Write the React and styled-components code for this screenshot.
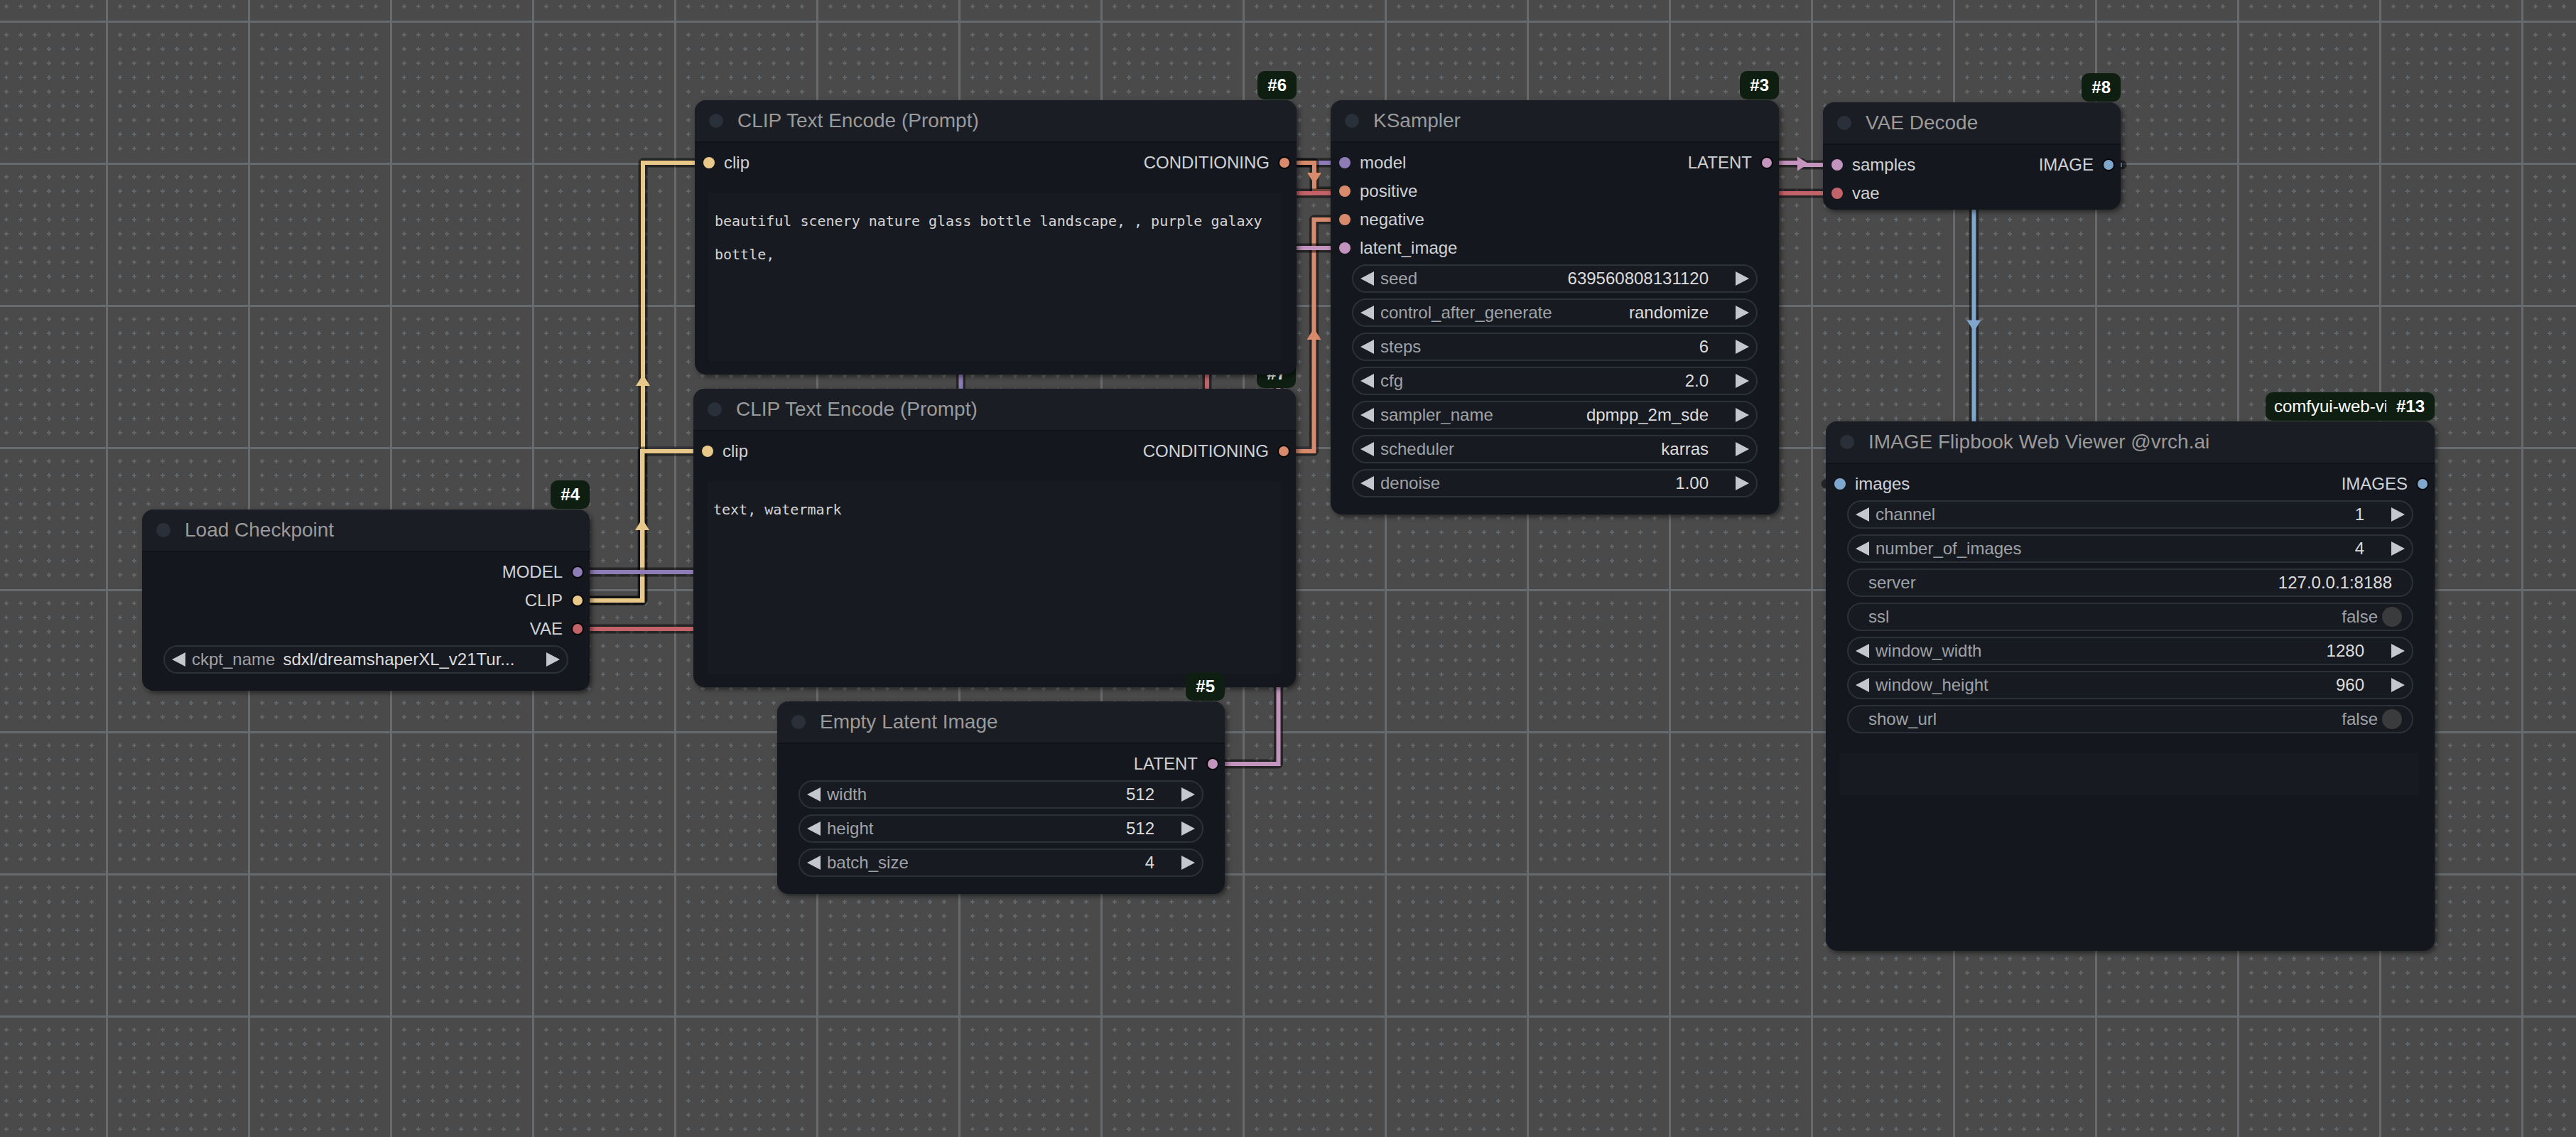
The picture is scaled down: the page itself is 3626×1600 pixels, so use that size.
import React from "react";
import styled, { createGlobalStyle } from "styled-components";

// slot / link colours
const C = {
  model: "#8e7cb6",
  clip: "#e9c98a",
  vae: "#c4626a",
  cond: "#d88a6c",
  latent: "#c394bd",
  image: "#7fa6cc",
};

const NODES = [
  {
    id: 4,
    title: "Load Checkpoint",
    x: 200, y: 717, w: 630, h: 255,
    inputs: [],
    outputs: [["MODEL", C.model], ["CLIP", C.clip], ["VAE", C.vae]],
    widgets: [{ kind: "combo", label: "ckpt_name", value: "sdxl/dreamshaperXL_v21Tur...", inline: true }],
  },
  {
    id: 7,
    title: "CLIP Text Encode (Prompt)",
    x: 976, y: 547, w: 848, h: 420,
    inputs: [["clip", C.clip]],
    outputs: [["CONDITIONING", C.cond]],
    prompt: "text, watermark",
  },
  {
    id: 6,
    title: "CLIP Text Encode (Prompt)",
    x: 978, y: 141, w: 847, h: 386,
    inputs: [["clip", C.clip]],
    outputs: [["CONDITIONING", C.cond]],
    prompt: "beautiful scenery nature glass bottle landscape, , purple galaxy bottle,",
  },
  {
    id: 5,
    title: "Empty Latent Image",
    x: 1094, y: 987, w: 630, h: 271,
    inputs: [],
    outputs: [["LATENT", C.latent]],
    widgets: [
      { kind: "number", label: "width", value: "512" },
      { kind: "number", label: "height", value: "512" },
      { kind: "number", label: "batch_size", value: "4" },
    ],
  },
  {
    id: 3,
    title: "KSampler",
    x: 1873, y: 141, w: 631, h: 583,
    inputs: [["model", C.model], ["positive", C.cond], ["negative", C.cond], ["latent_image", C.latent]],
    outputs: [["LATENT", C.latent]],
    widgets: [
      { kind: "number", label: "seed", value: "639560808131120" },
      { kind: "combo", label: "control_after_generate", value: "randomize" },
      { kind: "number", label: "steps", value: "6" },
      { kind: "number", label: "cfg", value: "2.0" },
      { kind: "combo", label: "sampler_name", value: "dpmpp_2m_sde" },
      { kind: "combo", label: "scheduler", value: "karras" },
      { kind: "number", label: "denoise", value: "1.00" },
    ],
  },
  {
    id: 8,
    title: "VAE Decode",
    x: 2566, y: 144, w: 419, h: 151,
    inputs: [["samples", C.latent], ["vae", C.vae]],
    outputs: [["IMAGE", C.image]],
  },
  {
    id: 13,
    title: "IMAGE Flipbook Web Viewer @vrch.ai",
    source: "comfyui-web-viewer",
    x: 2570, y: 593, w: 857, h: 745,
    inputs: [["images", C.image]],
    outputs: [["IMAGES", C.image]],
    widgets: [
      { kind: "number", label: "channel", value: "1" },
      { kind: "number", label: "number_of_images", value: "4" },
      { kind: "text", label: "server", value: "127.0.0.1:8188" },
      { kind: "toggle", label: "ssl", value: "false" },
      { kind: "number", label: "window_width", value: "1280" },
      { kind: "number", label: "window_height", value: "960" },
      { kind: "toggle", label: "show_url", value: "false" },
    ],
    preview: true,
  },
];

// a: output slot, b: input slot, dir: arrow angle
const LINKS = [
  { c: C.clip, a: [812, 845], b: [998, 229], dir: -90 },
  { c: C.clip, a: [812, 845], b: [996, 635], dir: -90 },
  { c: C.model, a: [812, 805], b: [1893, 229], dir: -90 },
  { c: C.cond, a: [1807, 229], b: [1893, 269], dir: 90 },
  { c: C.cond, a: [1806, 635], b: [1893, 309], dir: -90 },
  { c: C.latent, a: [1706, 1075], b: [1893, 349], dir: -90 },
  { c: C.vae, a: [812, 885], b: [2586, 272], dir: -90 },
  { c: C.latent, a: [2486, 229], b: [2586, 232], dir: 0 },
  { c: C.image, a: [2967, 232], b: [2590, 681], dir: 90 },
];

const linkPath = ([ax, ay], [bx, by]) => {
  const sx = ax + 20;
  const ex = bx - 20;
  const mx = (sx + ex) / 2;
  return `M${ax} ${ay} L${sx} ${ay} L${mx} ${ay} L${mx} ${by} L${ex} ${by} L${bx} ${by}`;
};

const GlobalStyle = createGlobalStyle`
  html, body {
    margin: 0;
    padding: 0;
    overflow: hidden;
    background: #4a4a4a;
  }
  body {
    font-family: "Liberation Sans", Arial, sans-serif;
  }
`;

const Canvas = styled.div`
  position: relative;
  width: 3626px;
  height: 1600px;
  overflow: hidden;
`;

const LinkLayer = styled.svg`
  position: absolute;
  left: 0;
  top: 0;
`;

const NodeBox = styled.div`
  position: absolute;
  left: ${(p) => p.$x}px;
  top: ${(p) => p.$y}px;
  width: ${(p) => p.$w}px;
  height: ${(p) => p.$h}px;
  display: flex;
  flex-direction: column;
  background: #14171d;
  border-radius: 16px;
  box-shadow: 3px 3px 7px rgba(0, 0, 0, 0.5);
`;

const BadgeRow = styled.div`
  position: absolute;
  right: 0;
  bottom: calc(100% + 1px);
  display: flex;
`;

const IdBadge = styled.div`
  height: 40px;
  padding: 0 14px;
  display: flex;
  align-items: center;
  background: #0e1f12;
  border-radius: ${(p) => (p.$joined ? "0 10px 10px 0" : "10px")};
  color: #ffffff;
  font-size: 24px;
  font-weight: bold;
`;

const SourceBadge = styled.div`
  box-sizing: border-box;
  width: 170px;
  height: 40px;
  padding-left: 12px;
  display: flex;
  align-items: center;
  overflow: hidden;
  white-space: nowrap;
  background: #0e1f12;
  border-radius: 10px 0 0 10px;
  color: #ffffff;
  font-size: 24px;
`;

const TitleBar = styled.div`
  box-sizing: border-box;
  height: 60px;
  flex: none;
  display: flex;
  align-items: center;
  gap: 20px;
  padding-left: 20px;
  background: #1a1d24;
  border-bottom: 2px solid #101217;
  border-radius: 16px 16px 0 0;
`;

const TitleDot = styled.span`
  width: 20px;
  height: 20px;
  border-radius: 50%;
  background: #2a3039;
`;

const Title = styled.span`
  color: #9a9a9a;
  font-size: 28px;
  white-space: nowrap;
`;

const Body = styled.div`
  flex: 1;
  display: flex;
  flex-direction: column;
  padding-top: 8px;
  min-height: 0;
`;

const SlotRow = styled.div`
  height: 40px;
  flex: none;
  display: flex;
  align-items: center;
`;

const InSlot = styled.div`
  display: flex;
  align-items: center;
  gap: 13px;
  padding-left: 12px;
`;

const OutSlot = styled.div`
  display: flex;
  align-items: center;
  gap: 12px;
  padding-right: 8px;
  margin-left: auto;
`;

const SlotLabel = styled.span`
  color: #cfd2d6;
  font-size: 24px;
  line-height: 1;
`;

const Dot = styled.span`
  box-sizing: border-box;
  width: ${(p) => (p.$out ? 18 : 16)}px;
  height: ${(p) => (p.$out ? 18 : 16)}px;
  border-radius: 50%;
  background: ${(p) => p.$c};
  border: ${(p) => (p.$out ? "2px solid #060607" : "none")};
`;

const WidgetList = styled.div`
  display: flex;
  flex-direction: column;
  gap: 8px;
  padding: 0 30px;
  margin-top: 3px;
`;

const Pill = styled.div`
  box-sizing: border-box;
  height: 40px;
  display: flex;
  align-items: center;
  padding: ${(p) => p.$pad};
  border: 2px solid #2c3139;
  border-radius: 20px;
  background: #171a20;
  font-size: 24px;
  white-space: nowrap;
`;

const ArrowLeft = styled.span`
  width: 0;
  height: 0;
  flex: none;
  border-top: 10px solid transparent;
  border-bottom: 10px solid transparent;
  border-right: 19px solid #c4c7cc;
  margin-right: 9px;
`;

const ArrowRight = styled.span`
  width: 0;
  height: 0;
  flex: none;
  border-top: 10px solid transparent;
  border-bottom: 10px solid transparent;
  border-left: 19px solid #c4c7cc;
  margin-left: ${(p) => (p.$auto ? "auto" : "0")};
`;

const WLabel = styled.span`
  color: #9fa2a7;
`;

const WValue = styled.span`
  color: ${(p) => (p.$dim ? "#9fa2a7" : "#dcdcdc")};
  margin-left: ${(p) => (p.$inline ? "11px" : "auto")};
  margin-right: ${(p) => p.$mr || 0}px;
  overflow: hidden;
`;

const Knob = styled.span`
  width: 28px;
  height: 28px;
  flex: none;
  border-radius: 50%;
  background: #3a3b3d;
`;

const Prompt = styled.div`
  flex: 1;
  margin: 23px 22px 19px 20px;
  padding: 16px 8px;
  background: #171a21;
  color: #d4d4d4;
  font-family: "DejaVu Sans Mono", "Liberation Mono", monospace;
  font-size: 20px;
  line-height: 47px;
  white-space: pre-wrap;
  overflow: hidden;
`;

const Preview = styled.div`
  height: 59px;
  margin: 28px 22px 0 20px;
  background: #171a21;
`;

const Widget = ({ w }) => {
  if (w.kind === "text") {
    return (
      <Pill $pad="0 28px">
        <WLabel>{w.label}</WLabel>
        <WValue>{w.value}</WValue>
      </Pill>
    );
  }
  if (w.kind === "toggle") {
    return (
      <Pill $pad="0 14px 0 28px">
        <WLabel>{w.label}</WLabel>
        <WValue $dim $mr={6}>{w.value}</WValue>
        <Knob />
      </Pill>
    );
  }
  return (
    <Pill $pad="0 10px">
      <ArrowLeft />
      <WLabel>{w.label}</WLabel>
      <WValue $inline={w.inline} $mr={w.inline ? 0 : 38}>{w.value}</WValue>
      <ArrowRight $auto={w.inline} />
    </Pill>
  );
};

const Node = ({ node }) => {
  const rows = Math.max(node.inputs.length, node.outputs.length);
  return (
    <NodeBox $x={node.x} $y={node.y} $w={node.w} $h={node.h}>
      <BadgeRow>
        {node.source && <SourceBadge>{node.source}</SourceBadge>}
        <IdBadge $joined={!!node.source}>#{node.id}</IdBadge>
      </BadgeRow>
      <TitleBar>
        <TitleDot />
        <Title>{node.title}</Title>
      </TitleBar>
      <Body>
        {Array.from({ length: rows }, (_, i) => {
          const inp = node.inputs[i];
          const out = node.outputs[i];
          return (
            <SlotRow key={i}>
              {inp && (
                <InSlot>
                  <Dot $c={inp[1]} />
                  <SlotLabel>{inp[0]}</SlotLabel>
                </InSlot>
              )}
              {out && (
                <OutSlot>
                  <SlotLabel>{out[0]}</SlotLabel>
                  <Dot $c={out[1]} $out />
                </OutSlot>
              )}
            </SlotRow>
          );
        })}
        {node.widgets && (
          <WidgetList>
            {node.widgets.map((w) => (
              <Widget key={w.label} w={w} />
            ))}
          </WidgetList>
        )}
        {node.prompt && <Prompt>{node.prompt}</Prompt>}
        {node.preview && <Preview />}
      </Body>
    </NodeBox>
  );
};

const ticks = Array.from({ length: 9 }, (_, i) => 20 + i * 20);

const Links = () => (
  <LinkLayer width="3626" height="1600" viewBox="0 0 3626 1600">
    <defs>
      <pattern id="grid" x="149" y="29" width="200" height="200" patternUnits="userSpaceOnUse">
        <rect width="200" height="200" fill="#4a4a4a" />
        {ticks.map((cx) =>
          ticks.map((cy) => (
            <g key={`${cx}-${cy}`} fill="#62676c">
              <rect x={cx - 3} y={cy - 1} width="6" height="2" />
              <rect x={cx - 1} y={cy - 3} width="2" height="6" />
            </g>
          ))
        )}
        <rect x="0" y="0" width="3" height="200" fill="#666b70" />
        <rect x="0" y="0" width="200" height="3" fill="#666b70" />
      </pattern>
    </defs>
    <rect width="3626" height="1600" fill="url(#grid)" />
    {LINKS.map((l, i) => {
      const d = linkPath(l.a, l.b);
      const cx = (l.a[0] + l.b[0]) / 2;
      const cy = (l.a[1] + l.b[1]) / 2;
      return (
        <g key={i}>
          <path d={d} fill="none" stroke="rgba(0,0,0,0.5)" strokeWidth="13" strokeLinejoin="round" strokeLinecap="round" />
          <path d={d} fill="none" stroke={l.c} strokeWidth="6" />
          <polygon points="10,0 -6,-10 -6,10" fill={l.c} transform={`translate(${cx} ${cy}) rotate(${l.dir})`} />
        </g>
      );
    })}
  </LinkLayer>
);

const App = () => (
  <>
    <GlobalStyle />
    <Canvas>
      <Links />
      {NODES.map((n) => (
        <Node key={n.id} node={n} />
      ))}
    </Canvas>
  </>
);

export default App;
